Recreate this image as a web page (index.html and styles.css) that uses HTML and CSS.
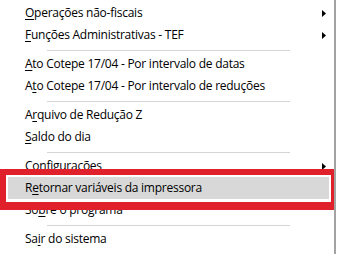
FILE: index.html
```html
<!DOCTYPE html>
<html lang="pt">
<head>
<meta charset="utf-8">
<title>Menu</title>
<link rel="stylesheet" href="styles.css">
</head>
<body>
<div class="menu">
  <div class="item"><span class="label"><u>O</u>perações não-fiscais</span><svg class="arrow" width="4" height="7" viewBox="0 0 4 7"><polygon points="0,0 4,3.5 0,7"/></svg></div>
  <div class="item"><span class="label"><u>F</u>unções Administrativas - TEF</span><svg class="arrow" width="4" height="7" viewBox="0 0 4 7"><polygon points="0,0 4,3.5 0,7"/></svg></div>
  <div class="sep"></div>
  <div class="item"><span class="label"><u>A</u>to Cotepe 17/04 - Por intervalo de datas</span></div>
  <div class="item"><span class="label">A<u>t</u>o Cotepe 17/04 - Por intervalo de reduções</span></div>
  <div class="sep"></div>
  <div class="item"><span class="label">A<u>r</u>quivo de Redução Z</span></div>
  <div class="item"><span class="label"><u>S</u>aldo do dia</span></div>
  <div class="sep"></div>
  <div class="item"><span class="label"><u>C</u>onfigurações</span><svg class="arrow" width="4" height="7" viewBox="0 0 4 7"><polygon points="0,0 4,3.5 0,7"/></svg></div>
  <div class="item item-hover"><span class="label">R<u>e</u>tornar variáveis da impressora</span></div>
  <div class="item"><span class="label">So<u>b</u>re o programa</span></div>
  <div class="sep"></div>
  <div class="item"><span class="label">Sa<u>i</u>r do sistema</span></div>
  <div class="annotation"></div>
</div>
</body>
</html>
```

FILE: styles.css
```css
html, body {
  margin: 0;
  padding: 0;
  background: #ffffff;
}

.menu {
  position: relative;
  width: 336px;
  height: 254px;
  box-sizing: border-box;
  border-right: 2px solid #a3a3a3;
  padding-top: 2px;
  font-family: "Open Sans", "Noto Sans", sans-serif;
  font-size: 12px;
  color: #000000;
  overflow: hidden;
}

.item {
  display: flex;
  align-items: center;
  height: 22px;
  line-height: 22px;
  margin: 0 5px 0 8px;
  padding-left: 17px;
  white-space: nowrap;
}

.label {
  letter-spacing: -0.25px;
}

.label u {
  text-decoration: underline;
  text-decoration-thickness: 1px;
  text-underline-offset: 2px;
}

.item-hover {
  background: #d8d8d8;
}

.arrow {
  margin-left: auto;
  margin-right: 3px;
  fill: #000000;
}

.sep {
  height: 7px;
  box-sizing: border-box;
  padding-top: 4px;
}

.sep::before {
  content: "";
  display: block;
  height: 1px;
  margin-left: 47px;
  width: 243px;
  background: #d4d4d4;
}

.annotation {
  position: absolute;
  left: 0;
  top: 169px;
  width: 337px;
  height: 41px;
  box-sizing: border-box;
  border: 6px solid #e0212b;
  border-bottom-width: 8px;
}
```
